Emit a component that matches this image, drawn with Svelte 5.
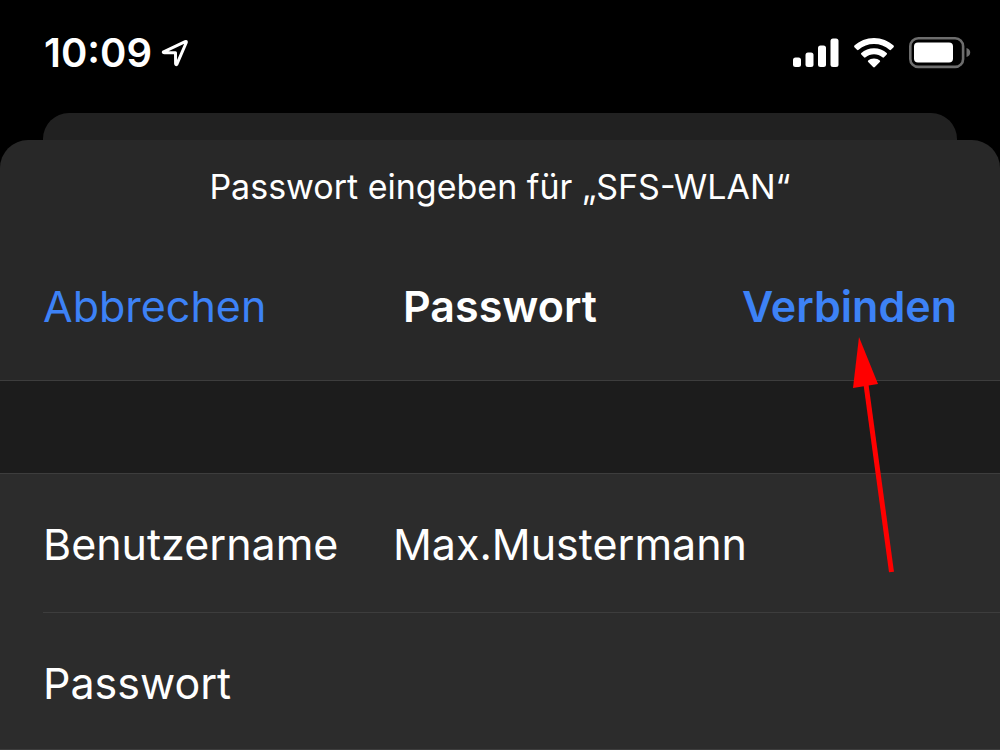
<script>
let username = $state('Max.Mustermann')
let password = $state('')

const network = 'SFS-WLAN'
</script>

<main class="screen">
  <header class="status">
    <div class="clock">
      <time>10:09</time>
      <svg class="location" width="28" height="28" viewBox="0 0 28 28" aria-hidden="true">
        <path d="M2.6 12.8 L24.2 2.6 Q25.6 2 25.3 3.5 L15.8 25.3 Q14.8 26.2 14.6 24.5 L14.5 13.8 L3.6 13.7 Q1.6 13.5 2.6 12.8 Z" />
      </svg>
    </div>
    <div class="indicators">
      <svg width="46" height="30" viewBox="0 0 46 30" aria-hidden="true">
        <rect x="0" y="19.5" width="8" height="9.5" rx="2.5" />
        <rect x="12.5" y="14.5" width="8" height="14.5" rx="2.5" />
        <rect x="25" y="7.5" width="8" height="21.5" rx="2.5" />
        <rect x="37.5" y="0.5" width="8" height="28.5" rx="2.5" />
      </svg>
      <svg width="42" height="30" viewBox="0 0 42 30" aria-hidden="true">
        <path d="M21 0 C28.5 0 35.6 2.9 40.6 7.6 Q41.3 8.4 40.6 9.2 L38 11.8 Q37.2 12.6 36.4 11.8 C32.2 8 26.8 6 21 6 C15.2 6 9.8 8 5.6 11.8 Q4.8 12.6 4 11.8 L1.4 9.2 Q.7 8.4 1.4 7.6 C6.4 2.9 13.5 0 21 0 Z" />
        <path d="M21 10.3 C25.9 10.3 30.4 12.1 33.7 15 Q34.5 15.8 33.7 16.6 L31 19.3 Q30.2 20 29.4 19.3 C27 17.4 24.2 16.3 21 16.3 C17.8 16.3 15 17.4 12.6 19.3 Q11.8 20 11 19.3 L8.3 16.6 Q7.5 15.8 8.3 15 C11.6 12.1 16.1 10.3 21 10.3 Z" />
        <path d="M21 20.4 C23.5 20.4 25.4 21.1 26.8 22.4 Q27.6 23.1 26.8 24 L21.9 29 Q21 29.8 20.1 29 L15.2 24 Q14.4 23.1 15.2 22.4 C16.6 21.1 18.5 20.4 21 20.4 Z" />
      </svg>
      <svg width="62" height="32" viewBox="0 0 62 32" aria-hidden="true">
        <rect class="shell" x="1.3" y="1.3" width="52.8" height="28.6" rx="8" />
        <rect x="5" y="5.5" width="39" height="20" rx="4" />
        <path class="cap" d="M57.5 11 C60 11.8 61.2 13.5 61.2 15.5 C61.2 17.5 60 19.2 57.5 20 Z" />
      </svg>
    </div>
  </header>

  <div class="sheet-behind"></div>

  <form class="sheet" onsubmit={e => e.preventDefault()}>
    <p class="prompt">Passwort eingeben für „{network}“</p>

    <div class="navbar">
      <button type="button" class="action">Abbrechen</button>
      <h1>Passwort</h1>
      <button type="submit" class="action confirm">Verbinden</button>
    </div>

    <div class="spacer"></div>

    <div class="fields">
      <div class="field">
        <label for="username">Benutzername</label>
        <input id="username" type="text" autocomplete="off" spellcheck="false" bind:value={username}>
      </div>
      <div class="field">
        <label for="password">Passwort</label>
        <input id="password" type="password" autocomplete="off" bind:value={password}>
      </div>
    </div>

    <!-- pointer to the connect button -->
    <svg class="pointer" width="44" height="236" viewBox="0 0 44 236" aria-hidden="true">
      <path class="shaft" d="M13 40 L39.5 235" />
      <path class="head" d="M7 0 L26 47 L1 51 Z" />
    </svg>
  </form>
</main>

<style>
:global(body) {
  margin: 0;
  background: #000000;
}

.screen {
  color: #ffffff;
  font-family: Inter, "Liberation Sans", sans-serif;
  font-size: 43px;
  line-height: 56px;
}

.status {
  display: flex;
  justify-content: space-between;
  align-items: center;
  height: 113px;
  padding: 0 29px 8px 44px;
  box-sizing: border-box;
}

.clock,
.indicators {
  display: flex;
  align-items: center;
}

.clock {
  gap: 9px;
  font-size: 40px;
  font-weight: 600;
}

.indicators {
  gap: 14px;
  fill: #ffffff;
}

.location {
  fill: none;
  stroke: #ffffff;
  stroke-width: 3;
  stroke-linejoin: round;
}

.shell {
  fill: none;
  stroke: #6d6d6d;
  stroke-width: 2.6;
}

.cap {
  fill: #6d6d6d;
}

.sheet-behind {
  height: 27px;
  margin: 0 43px;
  background: #212121;
  border-radius: 26px 26px 0 0;
}

.sheet {
  position: relative;
  background: #282828;
  border-radius: 28px 28px 0 0;
}

.prompt {
  margin: 0;
  padding: 24px 44px 0;
  font-size: 34px;
  line-height: 46px;
  text-align: center;
}

.navbar {
  display: grid;
  grid-template-columns: 1fr auto 1fr;
  align-items: center;
  padding: 68px 43px 46px;
}

h1 {
  margin: 0;
  font-size: inherit;
  font-weight: 600;
}

.action {
  justify-self: start;
  padding: 0;
  border: 0;
  background: none;
  color: #3d82f6;
  font: inherit;
  cursor: pointer;
}

.confirm {
  justify-self: end;
  font-weight: 600;
}

.spacer {
  height: 92px;
  background: #1c1c1c;
  border-top: 1px solid #3d3d3d;
  border-bottom: 1px solid #3d3d3d;
}

.fields {
  padding-left: 43px;
  background: #2c2c2c;
  border-bottom: 1px solid #3d3d3d;
}

.field {
  display: grid;
  grid-template-columns: 350px 1fr;
  align-items: center;
  padding: 42px 0 40px;
}

.field + .field {
  border-top: 1px solid #3d3d3d;
  padding-bottom: 38px;
}

input {
  min-width: 0;
  height: 56px;
  padding: 0;
  border: 0;
  outline: 0;
  background: none;
  color: inherit;
  font: inherit;
}

.pointer {
  position: absolute;
  top: 197px;
  right: 104px;
  pointer-events: none;
}

.shaft {
  fill: none;
  stroke: #ff0000;
  stroke-width: 5;
}

.head {
  fill: #ff0000;
}
</style>
